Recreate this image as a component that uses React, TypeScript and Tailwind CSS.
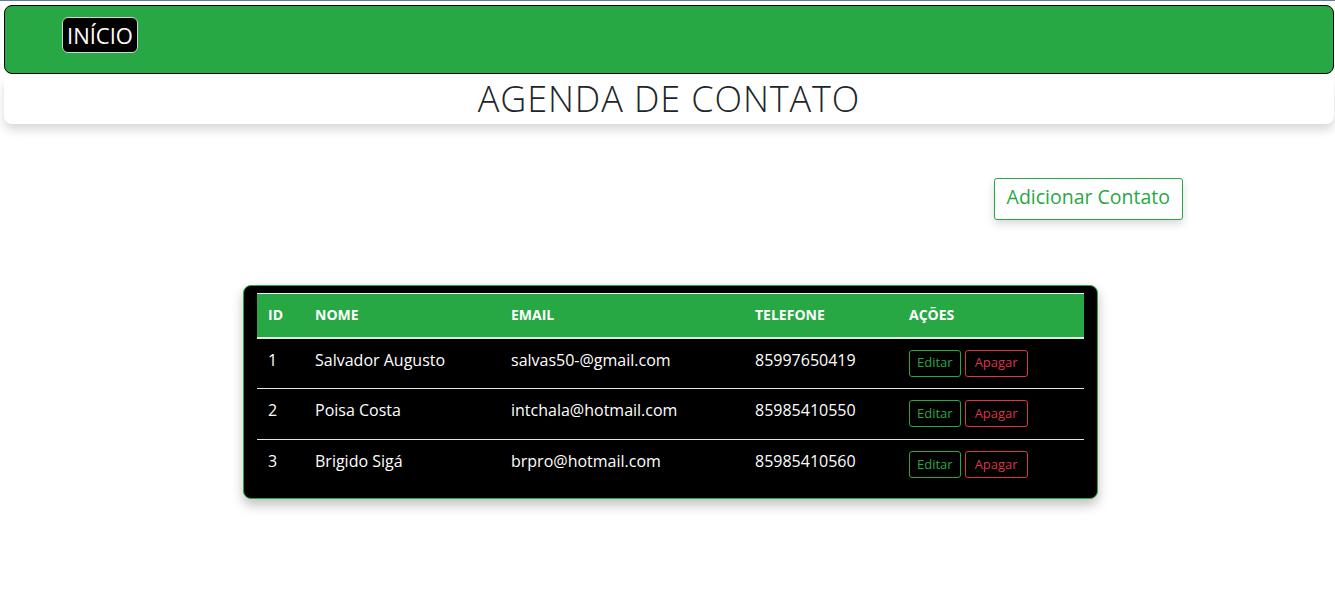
import React from "react";

const contatos = [
  { id: 1, nome: "Salvador Augusto", email: "salvas50-@gmail.com", telefone: "85997650419" },
  { id: 2, nome: "Poisa Costa", email: "intchala@hotmail.com", telefone: "85985410550" },
  { id: 3, nome: "Brigido Sigá", email: "brpro@hotmail.com", telefone: "85985410560" },
];

export default function App() {
  return (
    <div className="min-h-screen bg-white font-['Open_Sans',sans-serif] border-t border-[#5b7fa3]">
      {/* Navbar */}
      <nav className="ml-1 mr-px mt-1 h-[69px] bg-[#28a745] border border-black rounded-lg flex items-start pt-[11px] pl-[57px]">
        <a href="#" className="h-[36px] flex items-center bg-black text-white text-[22px] border border-[#cfd8cf] rounded-md px-[4px]">
          INÍCIO
        </a>
      </nav>

      {/* Title */}
      <header className="ml-1 mr-px mt-[4px] h-[46px] bg-white rounded-b-lg shadow-[0_6px_10px_rgba(0,0,0,0.15)] flex items-center justify-center pb-[5px]">
        <h1 className="text-[36px] font-light text-[#212529] tracking-wide leading-none">AGENDA DE CONTATO</h1>
      </header>

      <div className="flex justify-end pr-[152px] mt-[54px]">
        <button className="h-[42px] px-[12px] pb-[4px] border border-[#28a745] rounded-[3px] text-[#28a745] text-[19.5px] bg-white shadow-[0_4px_8px_rgba(0,0,0,0.15)]">
          Adicionar Contato
        </button>
      </div>

      {/* Table */}
      <div className="flex justify-center mt-[65px] pl-[6px]">
        <div className="w-[855px] bg-black border border-[#28a745] rounded-lg px-[13px] pt-[7px] pb-[7px] shadow-[0_6px_12px_rgba(0,0,0,0.25)]">
          <table className="w-full border-collapse text-white text-[16px]">
            <thead>
              <tr className="bg-[#28a745] border-t border-[#dfe]">
                <th className="w-[48px] h-[44px] text-left pl-[11px] font-bold text-sm">ID</th>
                <th className="w-[196px] text-left pl-[10px] font-bold text-sm">NOME</th>
                <th className="w-[244px] text-left pl-[10px] font-bold text-sm">EMAIL</th>
                <th className="w-[154px] text-left pl-[10px] font-bold text-sm">TELEFONE</th>
                <th className="text-left pl-[10px] font-bold text-sm">AÇÕES</th>
              </tr>
            </thead>
            <tbody>
              {contatos.map((c, i) => (
                <tr key={c.id} className={i === 0 ? "border-t-2 border-[#dfeee2]" : "border-t border-[#e5e5e5]"}>
                  <td className="h-[51px] pl-[11px] align-top pt-[9px]">{c.id}</td>
                  <td className="pl-[10px] align-top pt-[9px]">{c.nome}</td>
                  <td className="pl-[10px] align-top pt-[9px]">{c.email}</td>
                  <td className="pl-[10px] align-top pt-[9px]">{c.telefone}</td>
                  <td className="pl-[10px] align-top pt-[11px]">
                    <div className="flex gap-1">
                      <button className="h-[27px] px-[7px] border border-[#28a745] rounded-[3px] text-[#28a745] text-[13px]">Editar</button>
                      <button className="h-[27px] px-[9px] border border-[#dc3545] rounded-[3px] text-[#dc3545] text-[13px]">Apagar</button>
                    </div>
                  </td>
                </tr>
              ))}
            </tbody>
          </table>
        </div>
      </div>
    </div>
  );
}
